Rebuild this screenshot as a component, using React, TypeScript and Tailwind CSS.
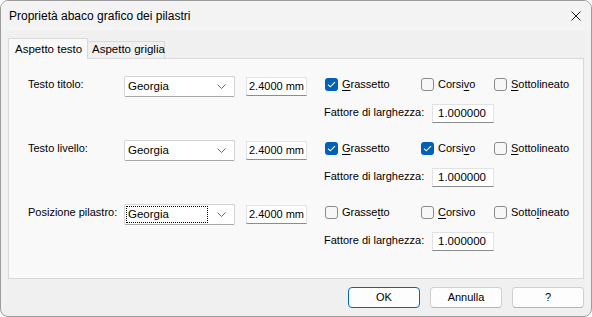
import React from "react";

const FONT = { fontFamily: '"Liberation Sans", Arial, sans-serif' };

function Mn({ text, at }: { text: string; at: number }) {
  return (
    <span>
      {text.slice(0, at)}
      <span className="underline underline-offset-[2px]">{text[at]}</span>
      {text.slice(at + 1)}
    </span>
  );
}

function Check({ checked }: { checked: boolean }) {
  return checked ? (
    <span className="w-[13px] h-[13px] rounded-[3px] bg-[#005fb8] flex items-center justify-center shrink-0">
      <svg width="9" height="7" viewBox="0 0 9 7" fill="none">
        <path d="M1 3.6 L3.3 5.8 L8 1.2" stroke="#fff" strokeWidth="1.1" />
      </svg>
    </span>
  ) : (
    <span className="w-[13px] h-[13px] rounded-[3px] border border-[#8a8a8a] bg-[#f7f7f7] shrink-0" />
  );
}

function CheckItem({
  checked,
  text,
  at,
  width,
}: {
  checked: boolean;
  text: string;
  at: number;
  width: string;
}) {
  return (
    <div className={`flex items-center gap-[4px] h-[16px] whitespace-nowrap ${width}`}>
      <Check checked={checked} />
      <Mn text={text} at={at} />
    </div>
  );
}

function Combo({ focused }: { focused?: boolean }) {
  return (
    <div className="w-[111px] h-[21px] bg-white border border-[#d4d4d4] border-b-[#a8a8a8] rounded-[2px] flex items-center pl-[1px] pr-[8px]">
      <div
        className={`flex-1 h-[17px] flex items-center pl-[1px] text-[11.5px] ${
          focused ? "border border-dotted border-black" : "border border-transparent"
        }`}
      >
        Georgia
      </div>
      <svg width="9" height="5" viewBox="0 0 9 5" fill="none" className="ml-[9px]">
        <path d="M0.5 0.5 L4.5 4.5 L8.5 0.5" stroke="#6b6b6b" strokeWidth="1" />
      </svg>
    </div>
  );
}

function Edit({ value, className }: { value: string; className: string }) {
  return (
    <div
      className={`h-[19px] bg-white border border-[#e2e2e2] border-b-[#8c8c8c] flex items-center whitespace-nowrap text-[11.5px] ${className}`}
    >
      {value}
    </div>
  );
}

const GROUPS = [
  {
    label: "Testo titolo:",
    bold: true,
    italic: false,
    marks: [0, 5, 0],
  },
  {
    label: "Testo livello:",
    bold: true,
    italic: true,
    marks: [0, 5, 0],
  },
  {
    label: "Posizione pilastro:",
    bold: false,
    italic: false,
    marks: [6, 0, 5],
    focused: true,
  },
];

export default function App() {
  return (
    <div
      className="w-[592px] h-[317px] bg-[#f0f0f0] border border-[#9c9c9c] rounded-[8px] overflow-hidden flex flex-col text-[11px] text-black"
      style={FONT}
    >
      {/* Title bar */}
      <div className="h-[30px] bg-[#f3f3f3] flex items-center justify-between pl-[8px] pr-[10px] shrink-0">
        <span className="text-[12px]">Proprietà abaco grafico dei pilastri</span>
        <svg width="10" height="10" viewBox="0 0 10 10" fill="none">
          <path d="M0.5 0.5 L9.5 9.5 M9.5 0.5 L0.5 9.5" stroke="#1a1a1a" strokeWidth="1" />
        </svg>
      </div>

      <div className="flex-1 flex flex-col px-[7px] pt-[7px]">
        {/* Tabs */}
        <div className="flex items-end h-[20px] relative z-10 whitespace-nowrap text-[11.5px]">
          <div className="w-[80px] h-[21px] -mb-px bg-[#f9f9f9] border border-b-0 border-[#d9d9d9] flex items-start pt-[2px] pl-[6px]">
            Aspetto testo
          </div>
          <div className="w-[77px] h-[17px] bg-[#f0f0f0] border border-b-0 border-l-0 border-[#d9d9d9] flex items-center pl-[4px]">
            Aspetto griglia
          </div>
        </div>

        {/* Panel */}
        <div className="h-[221px] bg-[#f9f9f9] border border-[#d9d9d9] pt-[17px] pl-[19px] flex flex-col gap-[17px]">
          {GROUPS.map((g) => (
            <div key={g.label} className="flex flex-col gap-[7px]">
              <div className="flex items-start">
                <div className="w-[96px] leading-[16px] whitespace-nowrap">{g.label}</div>
                <Combo focused={g.focused} />
                <Edit value="2.4000 mm" className="ml-[11px] mt-[1px] w-[61px] justify-center !text-[11px]" />
                <div className="ml-[18px] flex">
                  <CheckItem checked={g.bold} text="Grassetto" at={g.marks[0]} width="w-[96px]" />
                  <CheckItem checked={g.italic} text="Corsivo" at={g.marks[1]} width="w-[73px]" />
                  <CheckItem checked={false} text="Sottolineato" at={g.marks[2]} width="" />
                </div>
              </div>
              <div className="flex items-start pl-[296px]">
                <div className="w-[108px] leading-[16px] whitespace-nowrap">Fattore di larghezza:</div>
                <Edit value="1.000000" className="w-[62px] pl-[5px]" />
              </div>
            </div>
          ))}
        </div>

        {/* Buttons */}
        <div className="flex justify-end gap-[10px] mt-[8px]">
          <button className="w-[72px] h-[21px] bg-[#fdfdfd] border border-[#0067c0] rounded-[4px]">
            OK
          </button>
          <button className="w-[72px] h-[21px] bg-[#fdfdfd] border border-[#d0d0d0] border-b-[#b5b5b5] rounded-[4px]">
            Annulla
          </button>
          <button className="w-[72px] h-[21px] bg-[#fdfdfd] border border-[#d0d0d0] border-b-[#b5b5b5] rounded-[4px]">
            ?
          </button>
        </div>
      </div>
    </div>
  );
}
